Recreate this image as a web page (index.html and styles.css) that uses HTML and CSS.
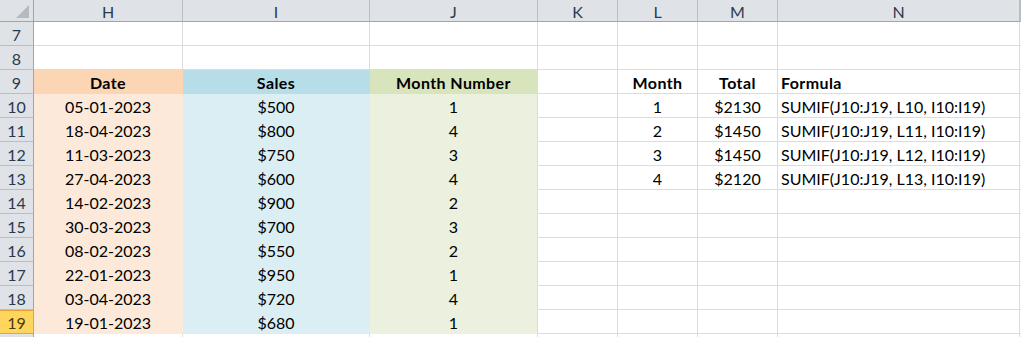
FILE: index.html
```html
<!DOCTYPE html>
<html>
<head>
<meta charset="utf-8">
<link rel="stylesheet" href="styles.css">
</head>
<body>
<div class="sheet">
  <div class="ch corner"><span class="tri"></span></div>
  <div class="ch">H</div><div class="ch">I</div><div class="ch">J</div><div class="ch">K</div><div class="ch">L</div><div class="ch">M</div><div class="ch">N</div><div class="ch"></div>

  <div class="rh">7</div><div class="c"></div><div class="c"></div><div class="c"></div><div class="c"></div><div class="c"></div><div class="c"></div><div class="c"></div><div class="c"></div>
  <div class="rh">8</div><div class="c"></div><div class="c"></div><div class="c"></div><div class="c"></div><div class="c"></div><div class="c"></div><div class="c"></div><div class="c"></div>

  <div class="rh">9</div><div class="c dh ctr b">Date</div><div class="c sh ctr b">Sales</div><div class="c mh ctr b">Month Number</div><div class="c"></div><div class="c ctr b">Month</div><div class="c ctr b">Total</div><div class="c lt b">Formula</div><div class="c"></div>

  <div class="rh">10</div><div class="c d ctr">05-01-2023</div><div class="c s ctr">$500</div><div class="c m ctr">1</div><div class="c"></div><div class="c ctr">1</div><div class="c ctr">$2130</div><div class="c lt">SUMIF(J10:J19, L10, I10:I19)</div><div class="c"></div>
  <div class="rh">11</div><div class="c d ctr">18-04-2023</div><div class="c s ctr">$800</div><div class="c m ctr">4</div><div class="c"></div><div class="c ctr">2</div><div class="c ctr">$1450</div><div class="c lt">SUMIF(J10:J19, L11, I10:I19)</div><div class="c"></div>
  <div class="rh">12</div><div class="c d ctr">11-03-2023</div><div class="c s ctr">$750</div><div class="c m ctr">3</div><div class="c"></div><div class="c ctr">3</div><div class="c ctr">$1450</div><div class="c lt">SUMIF(J10:J19, L12, I10:I19)</div><div class="c"></div>
  <div class="rh">13</div><div class="c d ctr">27-04-2023</div><div class="c s ctr">$600</div><div class="c m ctr">4</div><div class="c"></div><div class="c ctr">4</div><div class="c ctr">$2120</div><div class="c lt">SUMIF(J10:J19, L13, I10:I19)</div><div class="c"></div>
  <div class="rh">14</div><div class="c d ctr">14-02-2023</div><div class="c s ctr">$900</div><div class="c m ctr">2</div><div class="c"></div><div class="c"></div><div class="c"></div><div class="c"></div><div class="c"></div>
  <div class="rh">15</div><div class="c d ctr">30-03-2023</div><div class="c s ctr">$700</div><div class="c m ctr">3</div><div class="c"></div><div class="c"></div><div class="c"></div><div class="c"></div><div class="c"></div>
  <div class="rh">16</div><div class="c d ctr">08-02-2023</div><div class="c s ctr">$550</div><div class="c m ctr">2</div><div class="c"></div><div class="c"></div><div class="c"></div><div class="c"></div><div class="c"></div>
  <div class="rh">17</div><div class="c d ctr">22-01-2023</div><div class="c s ctr">$950</div><div class="c m ctr">1</div><div class="c"></div><div class="c"></div><div class="c"></div><div class="c"></div><div class="c"></div>
  <div class="rh">18</div><div class="c d ctr">03-04-2023</div><div class="c s ctr">$720</div><div class="c m ctr">4</div><div class="c"></div><div class="c"></div><div class="c"></div><div class="c"></div><div class="c"></div>
  <div class="rh sel">19</div><div class="c d ctr">19-01-2023</div><div class="c s ctr">$680</div><div class="c m ctr">1</div><div class="c"></div><div class="c"></div><div class="c"></div><div class="c"></div><div class="c"></div>
  <div class="rh"></div><div class="c"></div><div class="c"></div><div class="c"></div><div class="c"></div><div class="c"></div><div class="c"></div><div class="c"></div><div class="c"></div>
</div>
</body>
</html>
```

FILE: styles.css
```css
html, body {
  margin: 0;
  padding: 0;
  background: #ffffff;
  overflow: hidden;
}

.sheet {
  display: grid;
  grid-template-columns: 34px 149px 187px 168px 80px 80px 80px 242px 1px;
  grid-template-rows: 22px;
  grid-auto-rows: 24px;
  font-family: Lato, "Liberation Sans", sans-serif;
  font-size: 16px;
  color: #000;
}

.sheet > div {
  box-sizing: border-box;
  overflow: hidden;
  white-space: nowrap;
}

.ch {
  background: #dfe3e8;
  border-right: 1px solid #b9bec5;
  border-bottom: 1px solid #9ea5ae;
  color: #2b3a4a;
  display: flex;
  align-items: center;
  justify-content: center;
  font-size: 16px;
  padding-top: 1px;
}

.corner {
  position: relative;
  border-right: 1px solid #9ea5ae;
}

.tri {
  position: absolute;
  right: 4px;
  bottom: 3px;
  width: 0;
  height: 0;
  border-left: 13px solid transparent;
  border-bottom: 13px solid #b5bac1;
}

.rh {
  background: #dfe3e8;
  border-right: 1px solid #9ea5ae;
  border-bottom: 1px solid #b9bec5;
  color: #2b3a4a;
  display: flex;
  align-items: center;
  justify-content: center;
  padding-top: 1px;
}

.rh.sel {
  background: #ffd55b;
  border: 1px solid #e8a33a;
  border-left: none;
  color: #4a3a10;
}

.c {
  border-right: 1px solid #dadcdd;
  border-bottom: 1px solid #dadcdd;
  display: flex;
  align-items: flex-end;
  line-height: 19px;
  padding: 0 3px 1px 3px;
}

.ctr { justify-content: center; }
.rt { justify-content: flex-end; }
.lt { justify-content: flex-start; }
.b { font-weight: bold; letter-spacing: 0.4px; }

.dh { background: #fcd5b4; border-color: #fcd5b4; }
.sh { background: #b7dde8; border-color: #b7dde8; }
.mh { background: #d8e4bc; border-bottom-color: #d8e4bc; }
.d { background: #fde9d9; border-color: #fde9d9; }
.s { background: #daeef3; border-color: #daeef3; }
.m { background: #ebf1de; border-bottom-color: #ebf1de; }
```
